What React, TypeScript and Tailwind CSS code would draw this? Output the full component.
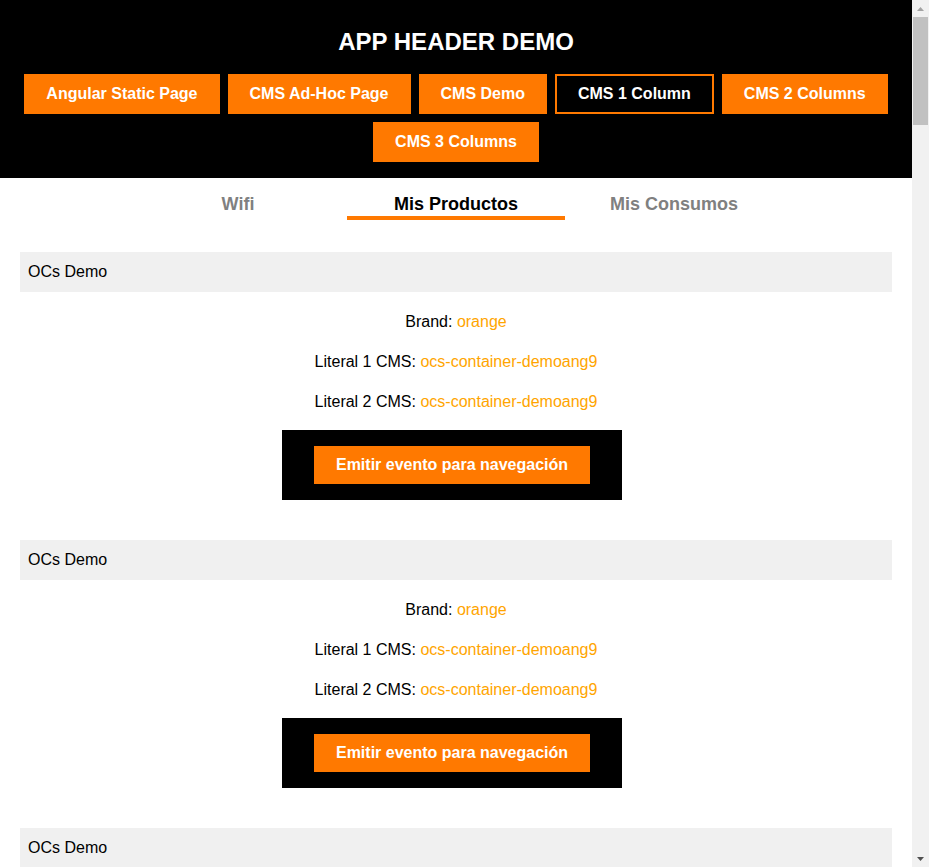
import React from 'react';

const navItems = [
  { label: 'Angular Static Page', active: false },
  { label: 'CMS Ad-Hoc Page', active: false },
  { label: 'CMS Demo', active: false },
  { label: 'CMS 1 Column', active: true },
  { label: 'CMS 2 Columns', active: false },
  { label: 'CMS 3 Columns', active: false },
];

const tabs = [
  { label: 'Wifi', active: false },
  { label: 'Mis Productos', active: true },
  { label: 'Mis Consumos', active: false },
];

function OcsBlock() {
  return (
    <section className="mx-5 mb-10">
      <div className="h-10 bg-[#f0f0f0] px-2 flex items-center text-base text-black">OCs Demo</div>
      <div className="flex flex-col items-center pt-[18px] text-base leading-6 text-black">
        <p>
          Brand: <span className="text-[#ffa500]">orange</span>
        </p>
        <p className="mt-4">
          Literal 1 CMS: <span className="text-[#ffa500]">ocs-container-demoang9</span>
        </p>
        <p className="mt-4">
          Literal 2 CMS: <span className="text-[#ffa500]">ocs-container-demoang9</span>
        </p>
        <div className="mt-4 mr-2 w-[340px] bg-black py-4 flex justify-center">
          <button className="h-[38px] w-[276px] bg-[#ff7900] text-white font-bold text-base">
            Emitir evento para navegación
          </button>
        </div>
      </div>
    </section>
  );
}

function Scrollbar() {
  return (
    <div className="w-[17px] h-[867px] shrink-0 bg-[#f1f1f1] flex flex-col items-center">
      <div className="h-[17px] w-full flex items-center justify-center">
        <svg width="7" height="4" viewBox="0 0 7 4">
          <path d="M0 4 L3.5 0 L7 4 Z" fill="#a3a3a3" />
        </svg>
      </div>
      <div className="w-[15px] h-[108px] bg-[#c1c1c1]" />
      <div className="flex-1" />
      <div className="h-[17px] w-full flex items-center justify-center">
        <svg width="7" height="4" viewBox="0 0 7 4">
          <path d="M0 0 L7 0 L3.5 4 Z" fill="#505050" />
        </svg>
      </div>
    </div>
  );
}

export default function App() {
  return (
    <div className="flex h-[867px] overflow-hidden bg-white font-['Liberation_Sans',Arial,sans-serif]">
      <main className="w-[912px] shrink-0 h-[867px] overflow-hidden">
        <header className="bg-black pt-[28px] pb-4">
          <h1 className="text-center text-white font-bold text-2xl leading-7">APP HEADER DEMO</h1>
          <nav className="mt-[18px] flex flex-wrap justify-center gap-2 px-5">
            {navItems.map((item) => (
              <button
                key={item.label}
                className={
                  item.active
                    ? 'h-10 px-[21px] border-2 border-[#ff7900] bg-black text-white font-bold text-base'
                    : 'h-10 px-[22px] bg-[#ff7900] text-white font-bold text-base'
                }
              >
                {item.label}
              </button>
            ))}
          </nav>
        </header>

        <div className="flex justify-center pt-[14px]">
          {tabs.map((tab) => (
            <div
              key={tab.label}
              className={
                tab.active
                  ? 'w-[218px] h-7 pt-[2px] border-b-4 border-[#ff7900] text-center font-bold text-lg leading-5 text-black'
                  : 'w-[218px] h-7 pt-[2px] text-center font-bold text-lg leading-5 text-[#808080]'
              }
            >
              {tab.label}
            </div>
          ))}
        </div>

        <div className="pt-8">
          <OcsBlock />
          <OcsBlock />
          <OcsBlock />
        </div>
      </main>
      <Scrollbar />
    </div>
  );
}
